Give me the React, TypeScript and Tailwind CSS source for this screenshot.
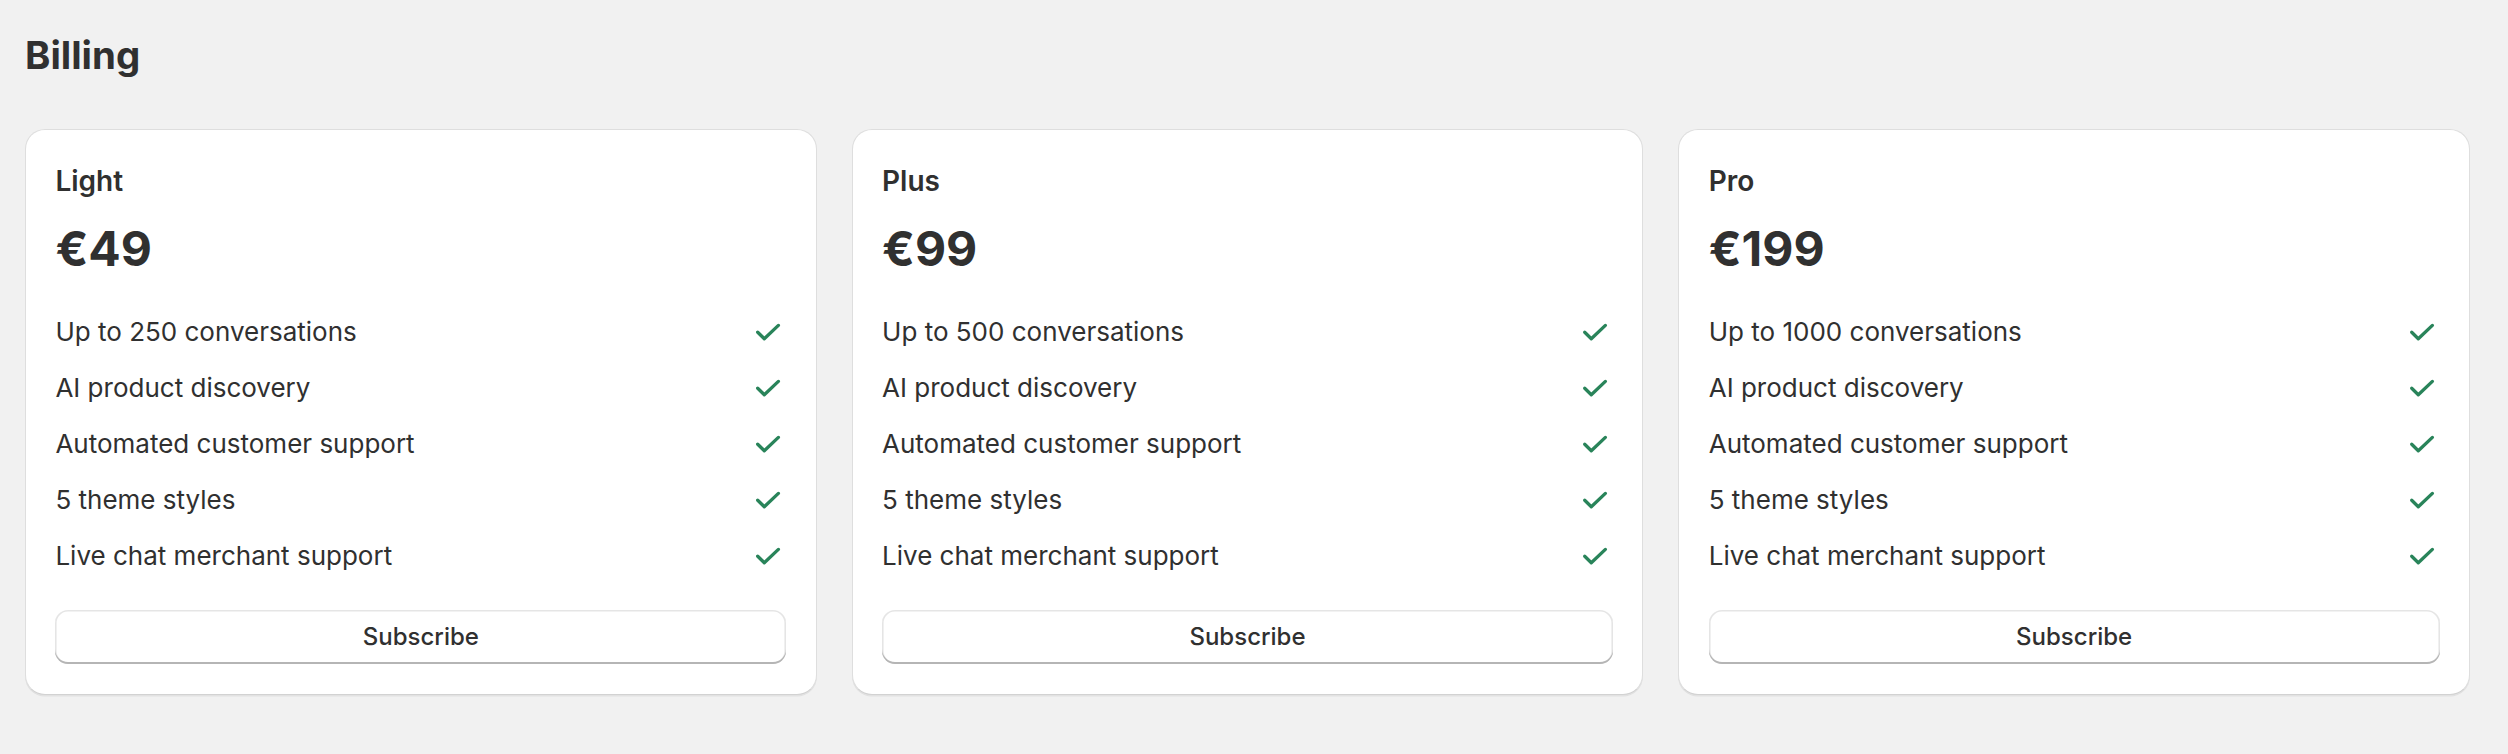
import React from "react";

const plans = [
  { name: "Light", price: "€49", convo: "Up to 250 conversations" },
  { name: "Plus", price: "€99", convo: "Up to 500 conversations" },
  { name: "Pro", price: "€199", convo: "Up to 1000 conversations" },
];

const features = [
  "AI product discovery",
  "Automated customer support",
  "5 theme styles",
  "Live chat merchant support",
];

function Check() {
  return (
    <svg width="32" height="32" viewBox="0 0 32 32" fill="none" className="shrink-0">
      <polyline
        points="3.7,16.2 10.3,22.7 24.4,9.4"
        stroke="#29845a"
        strokeWidth="3.3"
        strokeLinecap="round"
        strokeLinejoin="round"
      />
    </svg>
  );
}

function PlanCard({ name, price, convo }: { name: string; price: string; convo: string }) {
  const items = [convo, ...features];
  return (
    <div className="flex flex-col rounded-[20px] border-[1.6px] border-[#dedede] border-b-[#d2d2d2] bg-white px-[29.4px] pt-[32px] pb-[30.4px] shadow-[0_1.6px_0_0_rgba(26,26,26,0.07)]">
      <div className="h-[38px] text-[28px] leading-[38px] font-semibold text-[#303030]">{name}</div>
      <div className="mt-[20px] h-[58px] text-[48px] leading-[58px] font-bold text-[#303030]">{price}</div>
      <div className="mt-[26px] flex flex-col">
        {items.map((t) => (
          <div key={t} className="flex h-[56px] items-center justify-between">
            <span className="text-[26px] leading-[56px] text-[#303030]">{t}</span>
            <Check />
          </div>
        ))}
      </div>
      <button className="mt-[26px] h-[54px] w-full rounded-[13px] bg-white text-[24px] font-medium text-[#303030] shadow-[inset_0_-2px_0_0_#b5b5b5,inset_0_0_0_1.6px_rgba(0,0,0,0.1)]">
        Subscribe
      </button>
    </div>
  );
}

export default function App() {
  return (
    <div className="min-h-[754px] w-full bg-[#f1f1f1] pl-[25px] pr-[38px] pt-[31px] font-['Inter',sans-serif]">
      <h1 className="h-[48px] text-[38.4px] leading-[48px] font-bold text-[#303030]">Billing</h1>
      <div className="mt-[50px] grid grid-cols-3 gap-[35px]">
        {plans.map((p) => (
          <PlanCard key={p.name} {...p} />
        ))}
      </div>
    </div>
  );
}
